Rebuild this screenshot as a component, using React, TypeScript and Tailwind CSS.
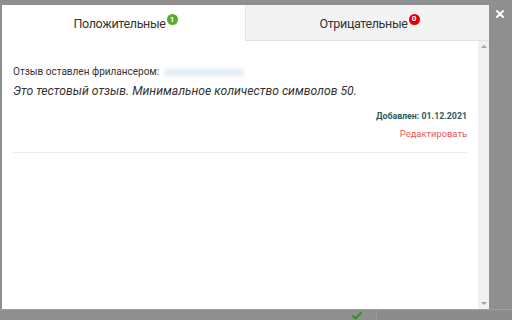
import { Check, X } from 'lucide-react'

const font = { fontFamily: 'Roboto, "Open Sans", sans-serif' }

function Badge({ n, color }: { n: number; color: string }) {
  return (
    <span
      className={`ml-px -mt-[10px] inline-flex h-[11px] w-[11px] items-center justify-center rounded-full text-[8px] font-bold leading-none tracking-normal text-white ${color}`}
    >
      {n}
    </span>
  )
}

export default function App() {
  return (
    <div className="relative h-[320px] w-[512px] overflow-hidden bg-[#8f8f8f]" style={font}>
      <div className="ml-[2px] mt-[5px] flex h-[304px] w-[487px] flex-col bg-white">
        {/* tabs */}
        <div className="flex h-[36px] shrink-0">
          <div className="flex w-[243px] items-center justify-center bg-white pl-[4px] pt-[3px] text-[12.5px] tracking-[-0.35px] text-[#333]">
            Положительные
            <Badge n={1} color="bg-[#5fa92e]" />
          </div>
          <div className="flex flex-1 items-center justify-center rounded-tl-[3px] border-b border-l border-[#e2e2e2] bg-[#f3f3f3] pl-[4px] pt-[3px] text-[12.5px] tracking-[-0.35px] text-[#333]">
            Отрицательные
            <Badge n={0} color="bg-[#e00000]" />
          </div>
        </div>

        {/* body */}
        <div className="flex min-h-0 flex-1">
          <div className="flex-1 px-[11px] pt-[24px]">
            <div className="flex items-center text-[10px] leading-[14px] text-[#333]">
              Отзыв оставлен фрилансером:
              <span className="ml-[5px] h-[7px] w-[80px] rounded-full bg-[#dfeaf3] blur-[2px]" />
            </div>
            <p className="mt-[4px] text-[12.2px] leading-[16px] italic text-[#333]">
              Это тестовый отзыв. Минимальное количество символов 50.
            </p>
            <div className="mt-[11px] text-right text-[8.8px] leading-[12px] font-bold text-[#2f5b5a]">
              Добавлен: 01.12.2021
            </div>
            <div className="mt-[5px] text-right text-[9.4px] leading-[14px] text-[#e8585a]">Редактировать</div>
            <div className="mt-[11px] h-px bg-[#ececec]" />
          </div>
          <div className="flex w-[11px] flex-col items-center justify-between bg-[#f1f1f1] py-[4px]">
            <span className="h-0 w-0 border-x-[3px] border-b-[3px] border-x-transparent border-b-[#a3a3a3]" />
            <span className="h-0 w-0 border-x-[3px] border-t-[3px] border-x-transparent border-t-[#a3a3a3]" />
          </div>
        </div>
      </div>

      <div className="flex h-[11px] border-t border-[#a0a0a0]">
        <div className="w-[376px] pl-[350px]">
          <Check className="h-[12px] w-[14px] text-[#3f8a1f]" strokeWidth={4} />
        </div>
        <div className="flex-1 border-l border-[#999] bg-[#8c8c8c]" />
      </div>

      <button className="absolute right-[6px] top-[8px] text-white">
        <X className="h-[12px] w-[12px]" strokeWidth={4} />
      </button>
    </div>
  )
}
